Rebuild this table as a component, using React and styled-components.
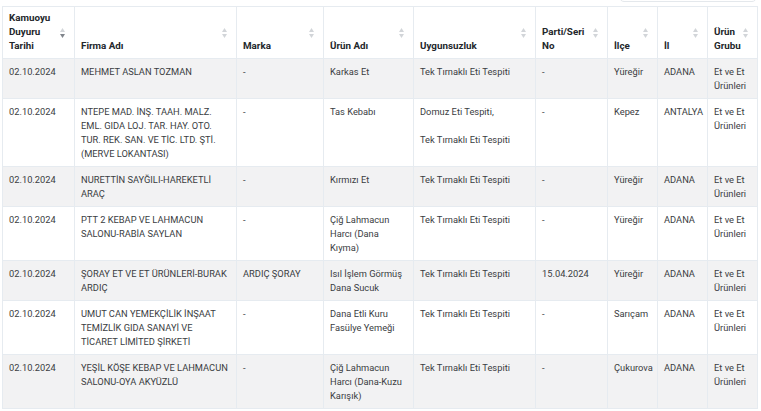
import React from 'react';
import styled, { createGlobalStyle } from 'styled-components';

const columns = [
  { key: 'date', title: ['Kamuoyu', 'Duyuru', 'Tarihi'], width: 72, sorted: 'desc' },
  { key: 'firm', title: ['Firma Adı'], width: 162 },
  { key: 'brand', title: ['Marka'], width: 87 },
  { key: 'product', title: ['Ürün Adı'], width: 90 },
  { key: 'issue', title: ['Uygunsuzluk'], width: 122 },
  { key: 'lot', title: ['Parti/Seri', 'No'], width: 72 },
  { key: 'district', title: ['İlçe'], width: 50 },
  { key: 'city', title: ['İl'], width: 50 },
  { key: 'group', title: ['Ürün', 'Grubu'], width: 50 },
];

const rows = [
  {
    id: 1, date: '02.10.2024', firm: 'MEHMET ASLAN TOZMAN', brand: '-', product: 'Karkas Et',
    issue: ['Tek Tırnaklı Eti Tespiti'], lot: '-', district: 'Yüreğir', city: 'ADANA', group: 'Et ve Et Ürünleri',
  },
  {
    id: 2, date: '02.10.2024', firm: 'NTEPE MAD. İNŞ. TAAH. MALZ. EML. GIDA LOJ. TAR. HAY. OTO. TUR. REK. SAN. VE TİC. LTD. ŞTİ. (MERVE LOKANTASI)', brand: '-', product: 'Tas Kebabı',
    issue: ['Domuz Eti Tespiti,', 'Tek Tırnaklı Eti Tespiti'], lot: '-', district: 'Kepez', city: 'ANTALYA', group: 'Et ve Et Ürünleri',
  },
  {
    id: 3, date: '02.10.2024', firm: 'NURETTİN SAYĞILI-HAREKETLİ ARAÇ', brand: '-', product: 'Kırmızı Et',
    issue: ['Tek Tırnaklı Eti Tespiti'], lot: '-', district: 'Yüreğir', city: 'ADANA', group: 'Et ve Et Ürünleri',
  },
  {
    id: 4, date: '02.10.2024', firm: 'PTT 2 KEBAP VE LAHMACUN SALONU-RABİA SAYLAN', brand: '-', product: 'Çiğ Lahmacun Harcı (Dana Kıyma)',
    issue: ['Tek Tırnaklı Eti Tespiti'], lot: '-', district: 'Yüreğir', city: 'ADANA', group: 'Et ve Et Ürünleri',
  },
  {
    id: 5, date: '02.10.2024', firm: 'ŞORAY ET VE ET ÜRÜNLERİ-BURAK ARDIÇ', brand: 'ARDIÇ ŞORAY', product: 'Isıl İşlem Görmüş Dana Sucuk',
    issue: ['Tek Tırnaklı Eti Tespiti'], lot: '15.04.2024', district: 'Yüreğir', city: 'ADANA', group: 'Et ve Et Ürünleri',
  },
  {
    id: 6, date: '02.10.2024', firm: 'UMUT CAN YEMEKÇİLİK İNŞAAT TEMİZLİK GIDA SANAYİ VE TİCARET LİMİTED ŞİRKETİ', brand: '-', product: 'Dana Etli Kuru Fasülye Yemeği',
    issue: ['Tek Tırnaklı Eti Tespiti'], lot: '-', district: 'Sarıçam', city: 'ADANA', group: 'Et ve Et Ürünleri',
  },
  {
    id: 7, date: '02.10.2024', firm: 'YEŞİL KÖŞE KEBAP VE LAHMACUN SALONU-OYA AKYÜZLÜ', brand: '-', product: 'Çiğ Lahmacun Harcı (Dana-Kuzu Karışık)',
    issue: ['Tek Tırnaklı Eti Tespiti'], lot: '-', district: 'Çukurova', city: 'ADANA', group: 'Et ve Et Ürünleri',
  },
];

function SortIcon({ sorted }) {
  return (
    <SortWrap>
      <svg width="5" height="10" viewBox="0 0 5 10">
        <path d="M2.5 0 L5 4 L0 4 Z" fill="#d2d5d9" />
        <path d="M2.5 10 L5 6 L0 6 Z" fill={sorted === 'desc' ? '#80858c' : '#d2d5d9'} />
      </svg>
    </SortWrap>
  );
}

export default function App() {
  return (
    <Page>
      <GlobalStyle />
      <Toolbar>
        <SearchBox />
      </Toolbar>
      <Table>
        <colgroup>
          {columns.map((c) => <col key={c.key} style={{ width: c.width }} />)}
        </colgroup>
        <thead>
          <tr>
            {columns.map((c) => (
              <Th key={c.key}>
                {c.title.map((t) => <div key={t}>{t}</div>)}
                <SortIcon sorted={c.sorted} />
              </Th>
            ))}
          </tr>
        </thead>
        <tbody>
          {rows.map((r, i) => (
            <Tr key={r.id} striped={i % 2 === 0}>
              <Td>{r.date}</Td>
              <Td>{r.firm}</Td>
              <Td>{r.brand}</Td>
              <Td>{r.product}</Td>
              <Td>
                {r.issue.map((line) => <IssueLine key={line}>{line}</IssueLine>)}
              </Td>
              <Td>{r.lot}</Td>
              <Td>{r.district}</Td>
              <Td>{r.city}</Td>
              <Td>{r.group}</Td>
            </Tr>
          ))}
        </tbody>
      </Table>
    </Page>
  );
}

const GlobalStyle = createGlobalStyle`
  body {
    margin: 0;
    background: #ffffff;
    font-family: Roboto, "Liberation Sans", sans-serif;
    overflow: hidden;
  }
`;

const Page = styled.div`
  padding: 0 4px 0 2px;
  margin-top: -26px;
`;

const Toolbar = styled.div`
  display: flex;
  justify-content: flex-end;
  margin-bottom: 4px;
`;

const SearchBox = styled.div`
  width: 136px;
  height: 26px;
  border: 1px solid #e4e8ec;
  border-radius: 5px;
`;

const Table = styled.table`
  border-collapse: collapse;
  table-layout: fixed;
  width: 755px;
  font-size: 9.3px;
  line-height: 14px;
  color: #3a3d42;
`;

const Th = styled.th`
  position: relative;
  border: 1px solid #e6ebf0;
  padding: 4px 16px 5px 6px;
  text-align: left;
  vertical-align: bottom;
  font-size: 9.8px;
  font-weight: 700;
  color: #23272b;
`;

const SortWrap = styled.span`
  position: absolute;
  right: 9px;
  top: 50%;
  transform: translateY(-50%);
  display: flex;
`;

const Tr = styled.tr`
  background: ${(p) => (p.striped ? '#f2f2f3' : '#ffffff')};
`;

const Td = styled.td`
  border: 1px solid #e6ebf0;
  padding: 6px 6px 5px 6px;
  vertical-align: top;
`;

const IssueLine = styled.p`
  margin: 0 0 14px 0;
  &:last-child {
    margin-bottom: 0;
  }
`;
